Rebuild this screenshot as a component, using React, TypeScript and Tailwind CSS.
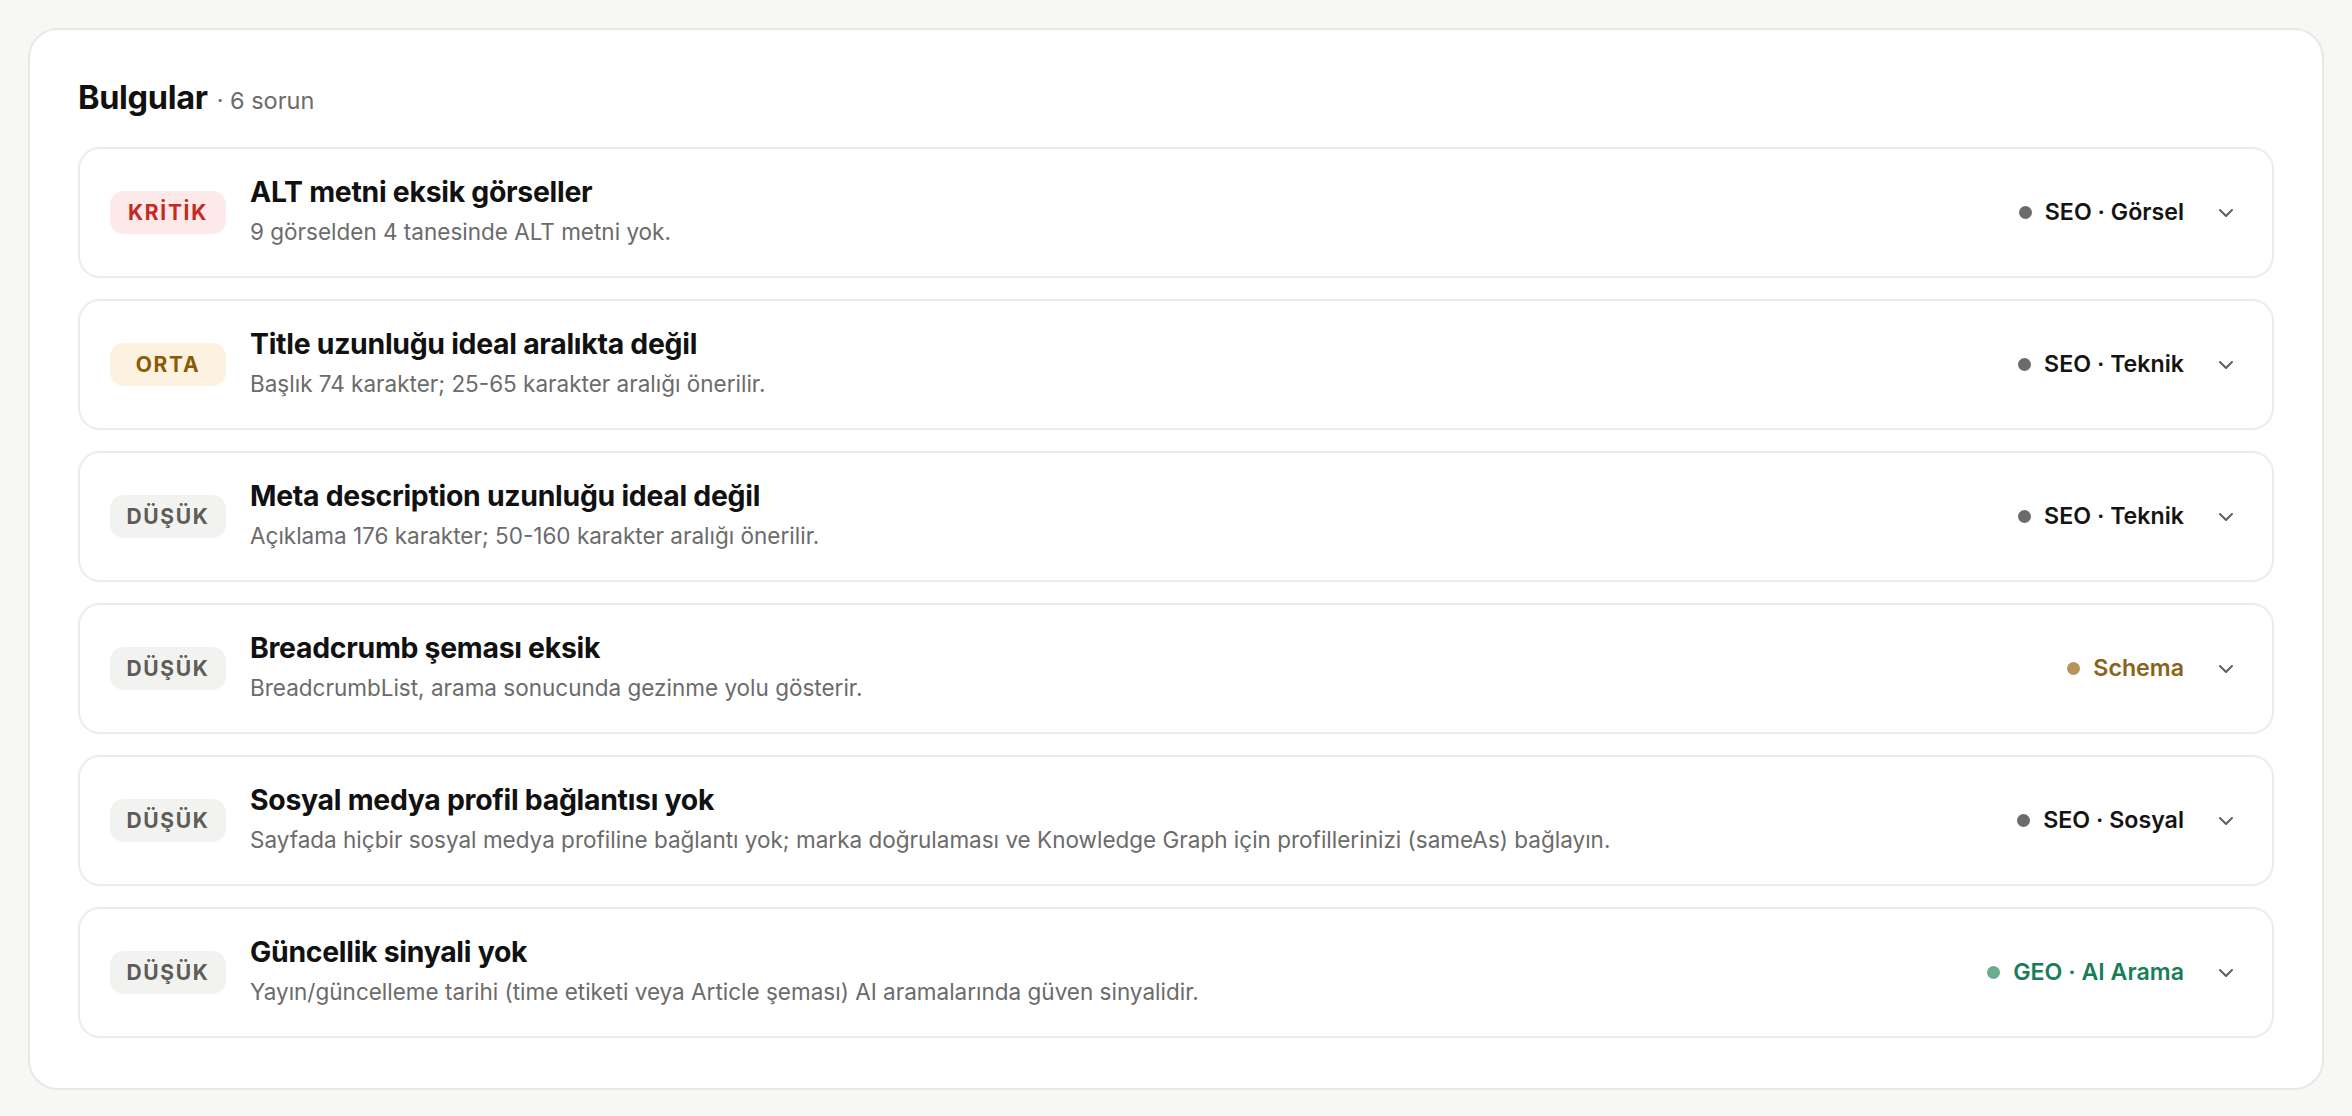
import { ChevronDown } from "lucide-react";

type Level = "kritik" | "orta" | "dusuk";
type Tone = "neutral" | "schema" | "geo";

type Finding = {
  level: Level;
  title: string;
  detail: string;
  category: string;
  tone: Tone;
};

const findings: Finding[] = [
  {
    level: "kritik",
    title: "ALT metni eksik görseller",
    detail: "9 görselden 4 tanesinde ALT metni yok.",
    category: "SEO · Görsel",
    tone: "neutral",
  },
  {
    level: "orta",
    title: "Title uzunluğu ideal aralıkta değil",
    detail: "Başlık 74 karakter; 25-65 karakter aralığı önerilir.",
    category: "SEO · Teknik",
    tone: "neutral",
  },
  {
    level: "dusuk",
    title: "Meta description uzunluğu ideal değil",
    detail: "Açıklama 176 karakter; 50-160 karakter aralığı önerilir.",
    category: "SEO · Teknik",
    tone: "neutral",
  },
  {
    level: "dusuk",
    title: "Breadcrumb şeması eksik",
    detail: "BreadcrumbList, arama sonucunda gezinme yolu gösterir.",
    category: "Schema",
    tone: "schema",
  },
  {
    level: "dusuk",
    title: "Sosyal medya profil bağlantısı yok",
    detail:
      "Sayfada hiçbir sosyal medya profiline bağlantı yok; marka doğrulaması ve Knowledge Graph için profillerinizi (sameAs) bağlayın.",
    category: "SEO · Sosyal",
    tone: "neutral",
  },
  {
    level: "dusuk",
    title: "Güncellik sinyali yok",
    detail:
      "Yayın/güncelleme tarihi (time etiketi veya Article şeması) AI aramalarında güven sinyalidir.",
    category: "GEO · AI Arama",
    tone: "geo",
  },
];

const levelStyles: Record<Level, { label: string; className: string }> = {
  kritik: { label: "KRİTİK", className: "bg-[#fde9e8] text-[#c42a22]" },
  orta: { label: "ORTA", className: "bg-[#fdf2e0] text-[#8a5a06]" },
  dusuk: { label: "DÜŞÜK", className: "bg-[#f2f2f0] text-[#5d5d5a]" },
};

const toneStyles: Record<Tone, { dot: string; text: string }> = {
  neutral: { dot: "bg-[#6b6b6b]", text: "text-[#141414]" },
  schema: { dot: "bg-[#b7955a]", text: "text-[#8a6318]" },
  geo: { dot: "bg-[#6aac8f]", text: "text-[#197e58]" },
};

function FindingRow({ finding }: { finding: Finding }) {
  const level = levelStyles[finding.level];
  const tone = toneStyles[finding.tone];

  return (
    <div className="flex h-[131px] items-center rounded-[22px] border-2 border-[#ebebe9] bg-white pl-[30px] pr-[34px]">
      <span
        className={`flex h-[43px] w-[116px] shrink-0 items-center justify-center rounded-[14px] text-[21px] font-bold tracking-[0.08em] ${level.className}`}
      >
        {level.label}
      </span>

      <div className="ml-[24px] flex min-w-0 flex-1 flex-col gap-[6px] pb-[4px]">
        <p className="text-[28.4px] font-bold leading-[36px] tracking-[-0.01em] text-[#111]">
          {finding.title}
        </p>
        <p className="text-[22.5px] leading-[32px] text-[#6b6b6b]">
          {finding.detail}
        </p>
      </div>

      <div className="flex shrink-0 items-center gap-[13px]">
        <span className={`h-[13px] w-[13px] rounded-full ${tone.dot}`} />
        <span className={`text-[23.2px] font-semibold ${tone.text}`}>
          {finding.category}
        </span>
      </div>

      <ChevronDown
        className="ml-[30px] h-[24px] w-[24px] shrink-0 text-[#5f5f5f]"
        strokeWidth={2}
      />
    </div>
  );
}

export default function App() {
  return (
    <div
      className="min-h-screen bg-[#f7f7f5] px-[28px] py-[28px]"
      style={{ fontFamily: "Inter, 'Noto Sans', sans-serif" }}
    >
      <section className="rounded-[30px] border-2 border-[#e8e8e5] bg-white px-[48px] pb-[50px] pt-[48px]">
        <h2 className="mb-[26px] flex items-baseline gap-[9px] leading-[40px]">
          <span className="text-[32.5px] font-bold tracking-[-0.01em] text-[#111]">
            Bulgular
          </span>
          <span className="text-[23.5px] text-[#6b6b6b]">· 6 sorun</span>
        </h2>

        <div className="flex flex-col gap-[21px]">
          {findings.map((finding) => (
            <FindingRow key={finding.title} finding={finding} />
          ))}
        </div>
      </section>
    </div>
  );
}
